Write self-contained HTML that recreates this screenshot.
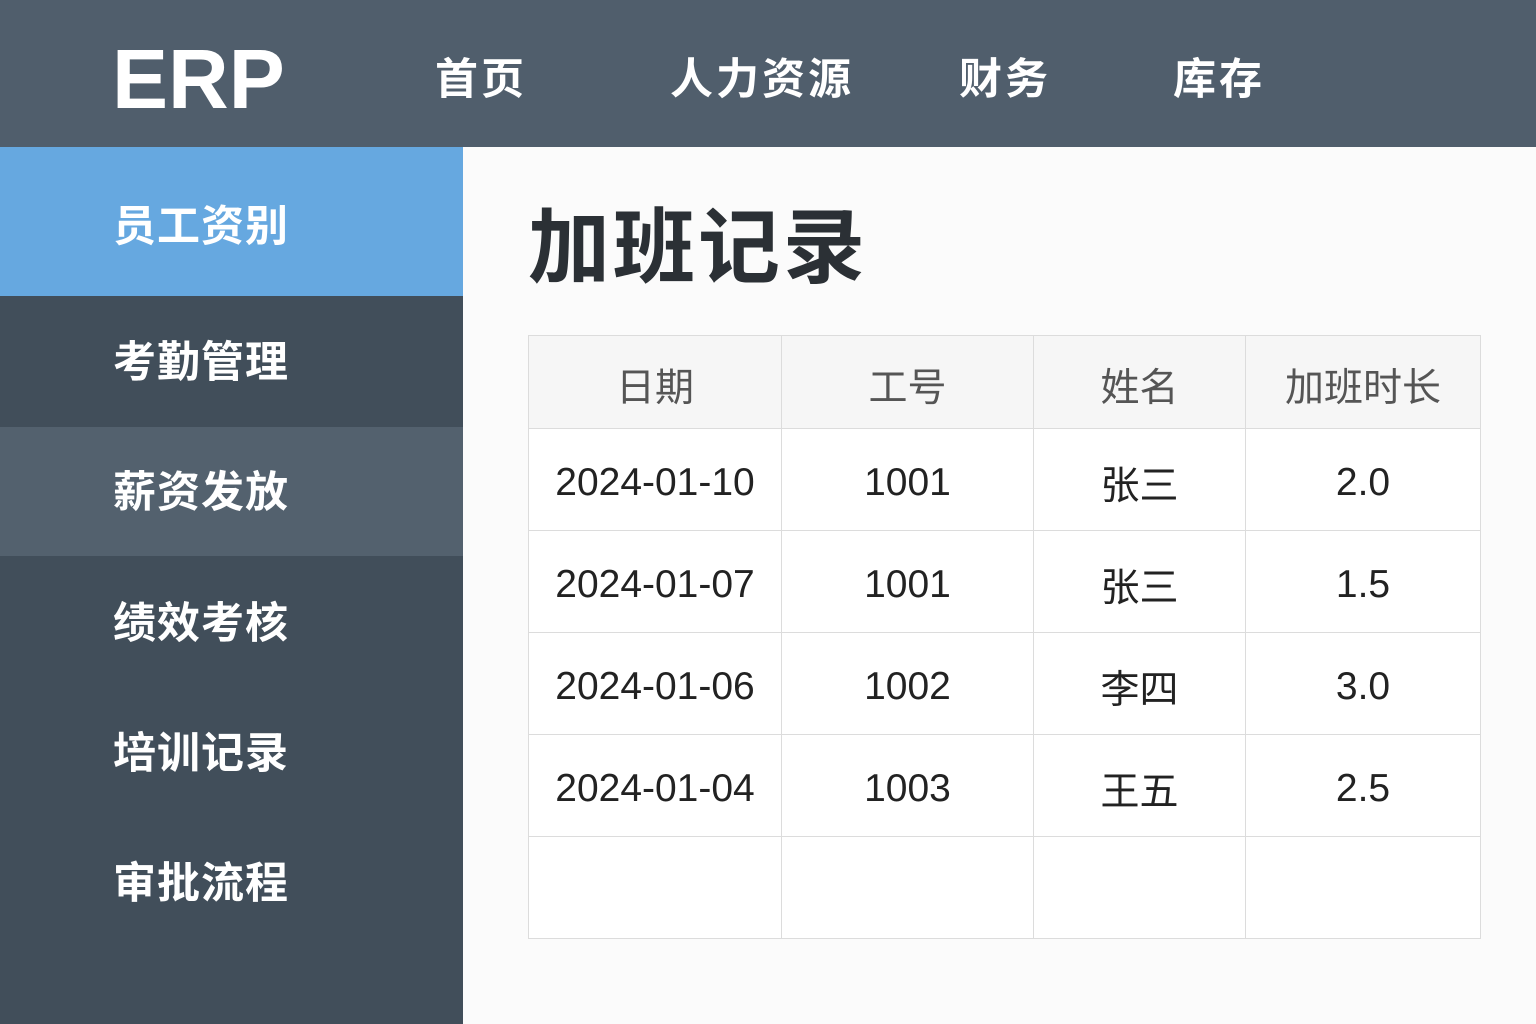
<!DOCTYPE html>
<html><head><meta charset="utf-8"><style>
*{margin:0;padding:0;box-sizing:border-box}
body{width:1536px;height:1024px;overflow:hidden;background:#fbfbfb;font-family:"Liberation Sans","Noto Sans CJK SC",sans-serif;position:relative}
.hdr{position:absolute;left:0;top:0;width:1536px;height:147px;background:#505e6c}
.logo{position:absolute;left:112px;top:31px;font-size:84px;font-weight:bold;color:#fff;line-height:96px;letter-spacing:0px}
.nav{position:absolute;top:52px;font-size:43px;font-weight:bold;color:#fff;line-height:56px;letter-spacing:3px}
.side{position:absolute;left:0;top:147px;width:463px;height:877px;background:#414e5a}
.it{position:absolute;left:0;width:463px;color:#fff;font-size:43px;font-weight:bold;padding-left:113px;letter-spacing:1px}
h1{position:absolute;left:528px;top:199px;font-size:82px;font-weight:bold;color:#2b3035;line-height:100px;letter-spacing:3px}
table{position:absolute;left:528px;top:335px;width:953px;border-collapse:collapse;background:#fff}
td,th{border:1.5px solid #dcdcdc;text-align:center;font-size:39px;font-weight:normal;color:#222;padding-top:6px}
th{background:#f6f6f6;color:#555;height:93px}
td{height:102px}
</style></head><body>
<div class="hdr">
<div class="logo">ERP</div>
<div class="nav" style="left:435px">首页</div>
<div class="nav" style="left:670px">人力资源</div>
<div class="nav" style="left:959px">财务</div>
<div class="nav" style="left:1173px">库存</div>
</div>
<div class="side">
<div class="it" style="top:0;height:149px;background:#66a8e0;line-height:160px">员工资别</div>
<div class="it" style="top:149px;height:131px;line-height:134px">考勤管理</div>
<div class="it" style="top:280px;height:129px;background:#53616e;line-height:132px">薪资发放</div>
<div class="it" style="top:409px;height:130px;line-height:136px">绩效考核</div>
<div class="it" style="top:539px;height:130px;line-height:136px">培训记录</div>
<div class="it" style="top:669px;height:130px;line-height:136px">审批流程</div>
</div>
<h1>加班记录</h1>
<table>
<tr><th style="width:253px">日期</th><th style="width:252px">工号</th><th style="width:212px">姓名</th><th>加班时长</th></tr>
<tr><td>2024-01-10</td><td>1001</td><td>张三</td><td>2.0</td></tr>
<tr><td>2024-01-07</td><td>1001</td><td>张三</td><td>1.5</td></tr>
<tr><td>2024-01-06</td><td>1002</td><td>李四</td><td>3.0</td></tr>
<tr><td>2024-01-04</td><td>1003</td><td>王五</td><td>2.5</td></tr>
<tr><td style="height:98px"></td><td></td><td></td><td></td></tr>
</table>
</body></html>
